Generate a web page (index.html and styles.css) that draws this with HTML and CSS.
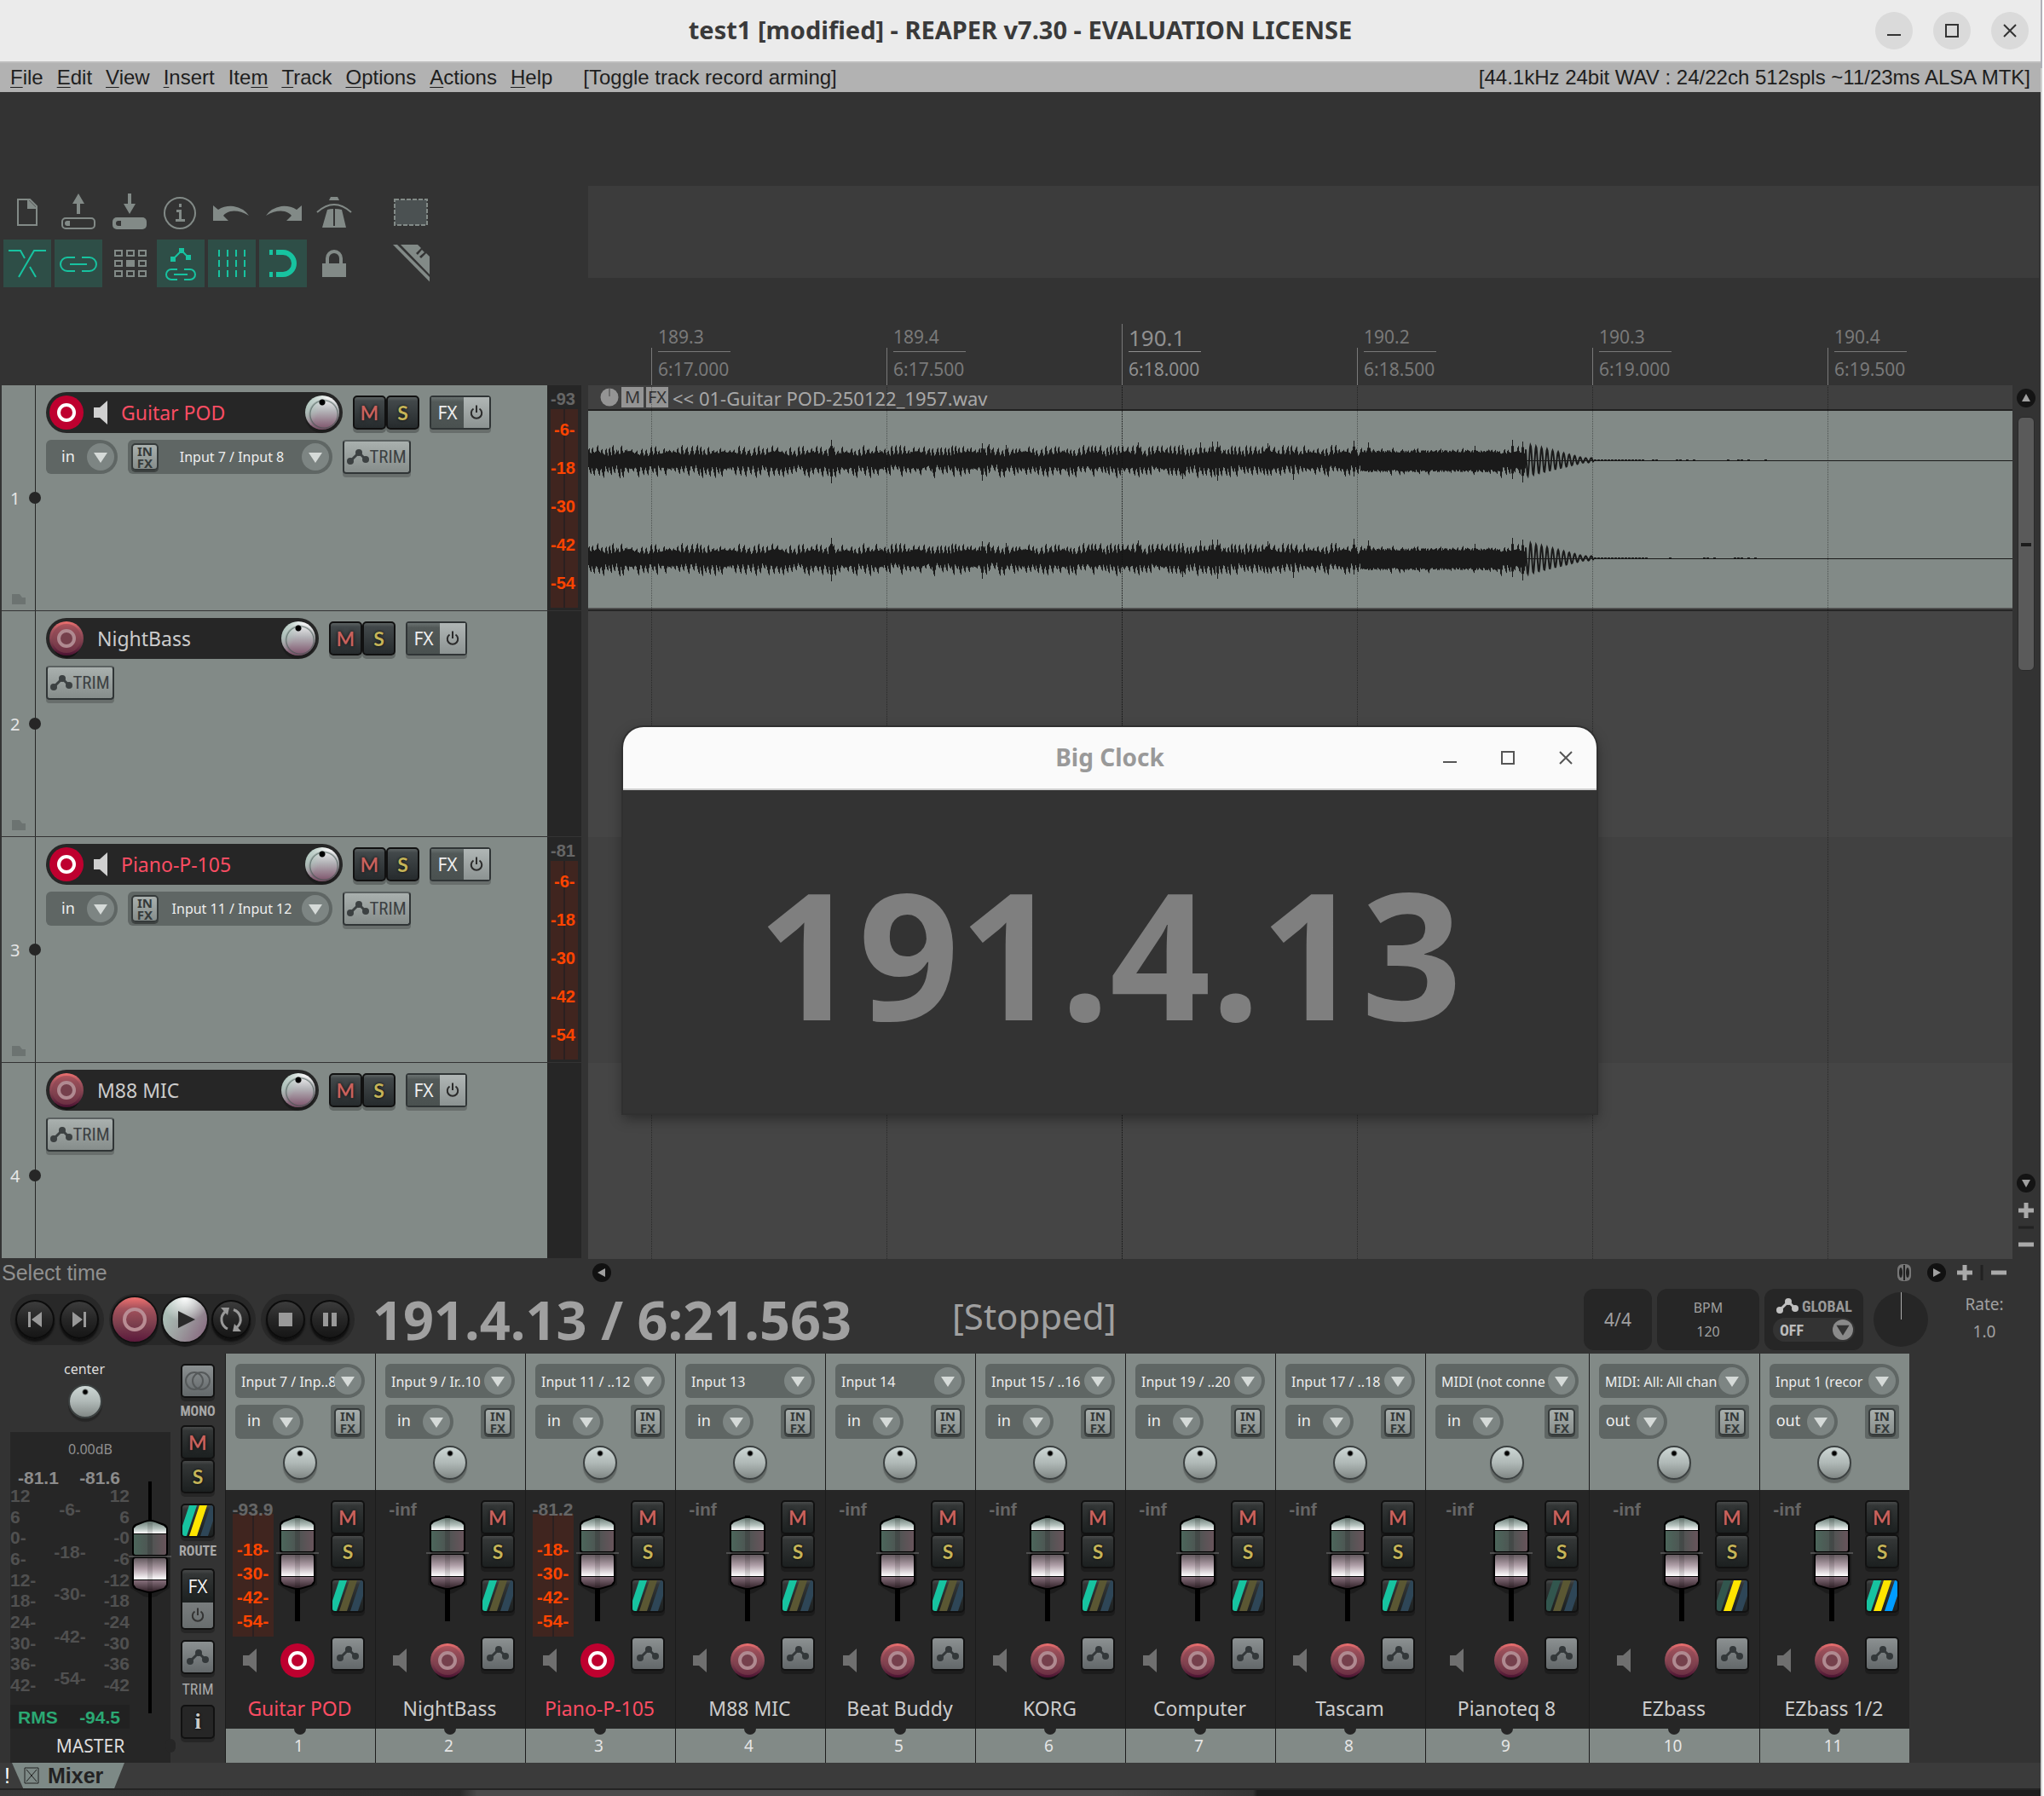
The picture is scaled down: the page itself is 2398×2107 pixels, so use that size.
FILE: index.html
```html
<!DOCTYPE html>
<html lang="en">
<head>
<meta charset="utf-8">
<title>test1 [modified] - REAPER v7.30 - EVALUATION LICENSE</title>
<link rel="stylesheet" href="styles.css">
</head>
<body>
<svg class="defs" width="0" height="0" aria-hidden="true">
  <defs>
    <linearGradient id="gRec" x1="0" y1="0" x2="0" y2="1"><stop offset="0" stop-color="#f0716f"/><stop offset=".25" stop-color="#a85560"/><stop offset=".6" stop-color="#7c3f4d"/><stop offset="1" stop-color="#4c1232"/></linearGradient>
    <linearGradient id="gCapA" x1="0" y1="0" x2="0" y2="1"><stop offset="0" stop-color="#6f827b"/><stop offset=".6" stop-color="#b5c2be"/><stop offset="1" stop-color="#ffffff"/></linearGradient>
    <linearGradient id="gCapB" x1="0" y1="0" x2="1" y2="0"><stop offset="0" stop-color="#4c665b"/><stop offset=".5" stop-color="#4d5452"/><stop offset="1" stop-color="#68545b"/></linearGradient>
    <linearGradient id="gCapC" x1="0" y1="0" x2="0" y2="1"><stop offset="0" stop-color="#645a5f"/><stop offset=".5" stop-color="#b09fa8"/><stop offset="1" stop-color="#ffffff"/></linearGradient>
    <linearGradient id="gCapD" x1="0" y1="0" x2="0" y2="1"><stop offset="0" stop-color="#87707c"/><stop offset="1" stop-color="#33242b"/></linearGradient>
  </defs>
  <symbol id="rec" viewBox="0 0 40 44"><ellipse cx="20" cy="24" rx="17" ry="19" fill="#000" opacity=".5"/><circle cx="20" cy="20" r="20" fill="url(#gRec)"/><circle cx="20" cy="20" r="17" fill="#84434f" opacity=".5"/><circle cx="20" cy="20" r="9" fill="#75404c" stroke="#b08a91" stroke-width="4"/></symbol>
  <symbol id="rec-on" viewBox="0 0 40 44"><circle cx="20" cy="20" r="20" fill="#be002f"/><circle cx="20" cy="20" r="9" fill="none" stroke="#fff" stroke-width="4"/></symbol>
  <symbol id="speaker" viewBox="0 0 16 28"><path d="M0 8h7L16 0v28L7 20H0z" fill="currentColor"/></symbol>
  <symbol id="power" viewBox="0 0 16 18"><path d="M4.5 4.5a6.2 6.2 0 1 0 7 0M8 0.500V9" fill="none" stroke="currentColor" stroke-width="2"/></symbol>
  <symbol id="env" viewBox="0 0 26 18"><path d="M4 14L14 4L22 12" fill="none" stroke="currentColor" stroke-width="3"/><circle cx="4" cy="14" r="4" fill="currentColor"/><circle cx="14" cy="4" r="4" fill="currentColor"/><circle cx="22" cy="12" r="4" fill="currentColor"/></symbol>
  <symbol id="cap" viewBox="-4 0 50 92">
    <path d="M-2 44V80L14 90Q21 92 28 90L44 80V44z" fill="#000" opacity=".25"/>
    <path d="M0 11Q0 6 5 4.500L15 1Q21 -1 27 1L37 4.500Q42 6 42 11V39Q42 42 39 43Q42 44 42 48V75Q42 80 37 82L27 85Q21 87 15 85L5 82Q0 80 0 75V48Q0 44 3 43Q0 42 0 39z" fill="#000"/>
    <path d="M2 16V10L5 7L15 3Q21 1 27 3L37 7L40 10V16z" fill="url(#gCapA)"/>
    <path d="M2 17H40V39Q40 41 38 41H4Q2 41 2 39z" fill="url(#gCapB)"/>
    <path d="M2 70V47Q2 45 4 45H38Q40 45 40 47V70z" fill="url(#gCapC)"/>
    <path d="M2 71H40V76L37 80L27 83Q21 85 15 83L5 80L2 76z" fill="url(#gCapD)"/>
    <path d="M18 3h6v80h-6z" fill="#000" opacity=".12"/>
    <path d="M-4 43H46" stroke="#777" stroke-width="1"/>
  </symbol>
</svg>

<div class="app">
  <header class="titlebar">
    <h1>test1 [modified] - REAPER v7.30 - EVALUATION LICENSE</h1>
    <div class="winbtns">
      <button aria-label="Minimize"><svg width="16" height="16"><path d="M0 13H16" stroke="#333" stroke-width="2"/></svg></button>
      <button aria-label="Maximize"><svg width="16" height="16"><path d="M1 1H15V15H1z" fill="none" stroke="#333" stroke-width="2"/></svg></button>
      <button aria-label="Close"><svg width="16" height="16"><path d="M1 1L15 15M15 1L1 15" stroke="#333" stroke-width="2"/></svg></button>
    </div>
  </header>
  <nav class="menubar">
    <a href="#"><u>F</u>ile</a><a href="#"><u>E</u>dit</a><a href="#"><u>V</u>iew</a><a href="#"><u>I</u>nsert</a><a href="#">Ite<u>m</u></a><a href="#"><u>T</u>rack</a><a href="#"><u>O</u>ptions</a><a href="#"><u>A</u>ctions</a><a href="#"><u>H</u>elp</a>
    <span class="lastaction">[Toggle track record arming]</span>
    <span class="audio">[44.1kHz 24bit WAV : 24/22ch 512spls ~11/23ms ALSA MTK]</span>
  </nav>

  <section class="top">
    <div class="toolbar">
      <button aria-label="New project"><svg viewBox="0 0 56 56"><path d="M17 13H31L39 21V43H17z" fill="none" stroke="#828a87" stroke-width="2"/><path d="M28 12V24H40z" fill="#828a87"/></svg></button>
      <button aria-label="Open project"><svg viewBox="0 0 56 56"><path d="M28 6L35 18H30V30H26V18H21z" fill="#828a87"/><rect x="9" y="35" width="38" height="12" rx="4" fill="none" stroke="#828a87" stroke-width="2"/><path d="M18 38v6h-3a3 3 0 0 1 0-6z" fill="#828a87"/></svg></button>
      <button aria-label="Save project"><svg viewBox="0 0 56 56"><path d="M28 30L35 18H30V6H26V18H21z" fill="#828a87"/><rect x="8" y="34" width="40" height="14" rx="5" fill="#828a87"/><path d="M18 38v6h-3a3 3 0 0 1 0-6z" fill="#333"/></svg></button>
      <button aria-label="Project settings"><svg viewBox="0 0 56 56"><circle cx="27" cy="29" r="18" fill="none" stroke="#828a87" stroke-width="2"/><path d="M26 18h3v4h-3zM23 25h6v11h4v3H22v-3h4v-8h-3z" fill="#828a87"/></svg></button>
      <button aria-label="Undo"><svg viewBox="0 0 56 56"><path d="M6 20L12 25Q20 20 30 21Q42 23 48 32Q36 25 26 27Q20 29 18 32L24 38H6z" fill="#828a87"/></svg></button>
      <button aria-label="Redo"><svg viewBox="0 0 56 56"><path d="M50 20L44 25Q36 20 26 21Q14 23 8 32Q20 25 30 27Q36 29 38 32L32 38H50z" fill="#828a87"/></svg></button>
      <button aria-label="Metronome"><svg viewBox="0 0 56 56"><path d="M24 10h8l2 4H22zM20 25Q23 24 27 24V43H29V24Q33 24 37 25L42 46H14zM26 43H30V46H26z" fill="#828a87"/><path d="M28 24V44" stroke="#333" stroke-width="2"/><path d="M8 28Q28 10 48 28" fill="none" stroke="#828a87" stroke-width="2"/></svg></button>
      <button class="far" aria-label="Marquee select"><svg viewBox="0 0 56 56"><rect x="9" y="13" width="38" height="30" fill="#4b5152" stroke="#828a87" stroke-width="2" stroke-dasharray="5 2"/></svg></button>
      <button class="on" aria-label="Auto crossfade"><svg viewBox="0 0 56 56" fill="none" stroke="#17c3a0" stroke-width="2"><path d="M6 13H20L25 22M31 32L38 44M18 44L36 13H50"/></svg></button>
      <button class="on" aria-label="Item grouping"><svg viewBox="0 0 56 56" fill="none" stroke="#17c3a0" stroke-width="2"><path d="M24 21H15a8 8 0 0 0 0 16H24M32 21H41a8 8 0 0 1 0 16H32M18 29H38"/></svg></button>
      <button aria-label="Ripple editing"><svg viewBox="0 0 56 56" fill="none" stroke="#828a87" stroke-width="2"><path d="M11 13h8v6h-8zM25 13h8v6h-8zM39 13h8v6h-8zM11 25h8v6h-8zM39 25h8v6h-8zM11 37h8v6h-8zM25 37h8v6h-8zM39 37h8v6h-8z"/><path d="M25 25h8v6h-8z" fill="#828a87"/></svg></button>
      <button class="on" aria-label="Envelope follow"><svg viewBox="0 0 56 56" fill="none" stroke="#17c3a0" stroke-width="2"><path d="M19 23L29 13L37 21M24 35H17a6 6 0 0 0 0 12H24M32 35H39a6 6 0 0 1 0 12H32M20 41H36"/><path d="M26 10h6v6h-6zM16 20h6v6h-6zM34 18h6v6h-6z" fill="#17c3a0" stroke="none"/></svg></button>
      <button class="on" aria-label="Grid lines"><svg viewBox="0 0 56 56" stroke="#17c3a0" stroke-width="2"><path d="M13 12V44M23 12V44M33 12V44M43 12V44" stroke-dasharray="8 4"/></svg></button>
      <button class="on" aria-label="Snap"><svg viewBox="0 0 56 56"><path d="M20 15H28a13 13 0 0 1 0 26H20" fill="none" stroke="#17c3a0" stroke-width="6"/><path d="M12 12h4v6h-4zM12 38h4v6h-4z" fill="#17c3a0"/></svg></button>
      <button aria-label="Lock"><svg viewBox="0 0 56 56"><path d="M20 30V22a8 8 0 0 1 16 0V30" fill="none" stroke="#828a87" stroke-width="4"/><path d="M14 28H42V44H14z" fill="#828a87"/></svg></button>
      <button class="far" aria-label="Ruler tool"><svg viewBox="0 0 56 56"><path d="M7 6H12L50 44V49.500z" fill="#828a87"/><path d="M16 6H36L40 10L34 16L36 18L41 12L44 15L38 20L40 22L46 16L50 20V41z" fill="#828a87"/></svg></button>
    </div>
    <div class="topright">
      <div class="region"></div>
      <div class="ruler">
        <div class="mark"><span>189.3</span><span>6:17.000</span></div>
        <div class="mark"><span>189.4</span><span>6:17.500</span></div>
        <div class="mark bar"><span>190.1</span><span>6:18.000</span></div>
        <div class="mark"><span>190.2</span><span>6:18.500</span></div>
        <div class="mark"><span>190.3</span><span>6:19.000</span></div>
        <div class="mark"><span>190.4</span><span>6:19.500</span></div>
      </div>
    </div>
  </section>

  <main class="main">
    <div class="tracks" id="tracks"></div>
    <div class="arrange">
      <div class="item">
        <div class="itemhead"><svg width="22" height="22"><circle cx="11" cy="11" r="10.500" fill="#949494"/><path d="M11 0V10" stroke="#444"/></svg><span class="tag">M</span><span class="tag">FX</span><span>&lt;&lt; 01-Guitar POD-250122_1957.wav</span></div>
        <svg class="wave" id="wave" height="232" width="1671" aria-label="Waveform"></svg>
      </div>
      <div class="lane"></div><div class="lane dark"></div><div class="lane"></div>
      <div class="grid"><i></i><i></i><i class="bar"></i><i></i><i></i><i></i></div>
    </div>
    <div class="vscroll">
      <button class="sb" aria-label="Scroll up"><svg width="22" height="22"><circle cx="11" cy="11" r="11" fill="#141414"/><path d="M11 6L16 15H6z" fill="#a0a0a0"/></svg></button>
      <div class="thumb"></div>
      <svg class="vzoom" width="22" height="92"><circle cx="11" cy="11" r="11" fill="#141414"/><path d="M11 16L16 7H6z" fill="#a0a0a0"/><path d="M2 43H20M11 34V52" stroke="#aaa" stroke-width="5"/><path d="M2 63H20" stroke="#222" stroke-width="3"/><path d="M2 83H20" stroke="#aaa" stroke-width="5"/></svg>
    </div>
  </main>

  <div class="status">
    <span class="hint">Select time</span>
    <button class="sb" aria-label="Scroll left"><svg width="22" height="22"><circle cx="11" cy="11" r="11" fill="#111"/><path d="M6 11L15 6V16z" fill="#a0a0a0"/></svg></button>
    <svg class="hzoom" width="132" height="22"><rect x="1" y="1" width="16" height="20" rx="6" fill="#777"/><ellipse cx="5" cy="11" rx="2" ry="6" fill="#222"/><path d="M9 2V20" stroke="#222" stroke-width="2"/><ellipse cx="13" cy="11" rx="2" ry="6" fill="#222"/><circle cx="47" cy="11" r="11" fill="#111"/><path d="M52 11L43 6V16z" fill="#a0a0a0"/><path d="M71 11H89M80 2V20" stroke="#aaa" stroke-width="5"/><path d="M100 2V20" stroke="#222" stroke-width="3"/><path d="M111 11H129" stroke="#aaa" stroke-width="5"/></svg>
  </div>

  <section class="transport">
    <div class="pill">
      <button class="round" aria-label="Go to start"><svg width="20" height="20"><path d="M2 1H5V19H2zM18 1V19L6 10z" fill="#999"/></svg></button>
      <button class="round" aria-label="Go to end"><svg width="20" height="20"><path d="M15 1H18V19H15zM2 1V19L14 10z" fill="#999"/></svg></button>
    </div>
    <div class="pill mid">
      <button class="big rec" aria-label="Record"><svg width="56" height="56"><circle cx="28" cy="28" r="12" fill="none" stroke="#b98d94" stroke-width="4"/></svg></button>
      <button class="big play" aria-label="Play"><svg width="56" height="56"><path d="M20 18L40 28L20 38z" fill="#2a2a2a"/></svg></button>
      <button class="round" aria-label="Repeat"><svg width="30" height="30" fill="none" stroke="#999" stroke-width="3"><path d="M8 6A12 12 0 0 0 11 26M22 24A12 12 0 0 0 18 3.500"/><path d="M3 1H13L11 10zM27 29H17L19 20z" fill="#999" stroke="none"/></svg></button>
    </div>
    <div class="pill">
      <button class="round" aria-label="Stop"><svg width="20" height="20"><path d="M2 2H18V18H2z" fill="#999"/></svg></button>
      <button class="round" aria-label="Pause"><svg width="20" height="20"><path d="M2 2H8V18H2zM12 2H18V18H12z" fill="#999"/></svg></button>
    </div>
    <output class="time">191.4.13 / 6:21.563</output>
    <output class="state">[Stopped]</output>
    <button class="box sig">4/4</button>
    <div class="box bpm"><label for="bpm">BPM</label><input id="bpm" value="120"></div>
    <div class="box global"><div class="gl"><svg width="26" height="18"><use href="#env"/></svg><span class="narrow">GLOBAL</span></div>
      <div class="dd off"><select class="narrow" aria-label="Global automation"><option>OFF</option></select></div></div>
    <input class="ratedial" type="range" aria-label="Play rate">
    <div class="rate"><label for="rate">Rate:</label><input id="rate" value="1.0"></div>
  </section>

  <section class="mixer">
    <div class="master">
      <div class="mleft">
        <span class="pan">center</span>
        <input class="knob" type="range" aria-label="Master pan">
        <div class="mpanel">
          <span class="db">0.00dB</span>
          <div class="mpeaks"><span>-81.1</span><span>-81.6</span></div>
          <div class="mscale">
            <div class="sc"><span>12</span><span>6</span><span>0-</span><span>6-</span><span>12-</span><span>18-</span><span>24-</span><span>30-</span><span>36-</span><span>42-</span></div>
            <div class="sc centre"><span>-6-</span><span>-18-</span><span>-30-</span><span>-42-</span><span>-54-</span></div>
            <div class="sc right"><span>12</span><span>6</span><span>-0</span><span>-6</span><span>-12</span><span>-18</span><span>-24</span><span>-30</span><span>-36</span><span>-42</span></div>
          </div>
          <div class="rms"><span>RMS</span><span>-94.5</span></div>
          <span class="mname">MASTER</span>
          <div class="fader mfader"><svg class="cap" width="50" height="92"><use href="#cap"/></svg><input type="range" aria-label="Master volume"></div>
        </div>
      </div>
      <div class="mright">
        <button class="sq grey" aria-label="Mono"><svg width="30" height="22" fill="none" stroke="#55595a" stroke-width="2"><circle cx="11" cy="11" r="10"/><circle cx="19" cy="11" r="10"/></svg></button>
        <span class="narrow">MONO</span>
        <button class="sq m">M</button><button class="sq s">S</button>
        <button class="sq route" aria-label="Route" id="mroute"></button>
        <span class="narrow cap2">ROUTE</span>
        <button class="sq fxv">FX</button><button class="sq pwv" aria-label="FX bypass"><svg width="16" height="18"><use href="#power"/></svg></button>
        <button class="sq grey envb" aria-label="Trim envelopes"><svg width="26" height="18"><use href="#env"/></svg></button>
        <span class="narrow cap3">TRIM</span>
        <button class="sq info">i</button>
      </div>
    </div>
    <div class="strips" id="strips"></div>
  </section>

  <footer class="tabs"><span class="bang">!</span><a class="tab" href="#"><svg width="18" height="20" fill="none" stroke="#222"><path d="M1 1H17V19H1zM3 3L15 17M15 3L3 17" stroke-width="1"/></svg>Mixer</a></footer>
  <div class="desk"></div>

  <section class="clock" aria-label="Big Clock">
    <header><h2>Big Clock</h2>
      <div class="winbtns">
        <button aria-label="Minimize"><svg width="16" height="16"><path d="M0 13H16" stroke="#555" stroke-width="2"/></svg></button>
        <button aria-label="Maximize"><svg width="16" height="16"><path d="M1 1H15V15H1z" fill="none" stroke="#555" stroke-width="2"/></svg></button>
        <button aria-label="Close"><svg width="16" height="16"><path d="M1 1L15 15M15 1L1 15" stroke="#555" stroke-width="2"/></svg></button>
      </div>
    </header>
    <output>191.4.13</output>
  </section>
</div>
<script src="app.js"></script>
</body>
</html>
```
FILE: styles.css
```css
* { box-sizing: border-box; }
body { margin: 0; height: 100vh; background: linear-gradient(90deg, transparent calc(100% - 2px), #fff 0), linear-gradient(#b0b0b8 80px, #d0d0d0 0); font-family: "Noto Sans", "Open Sans", sans-serif; color: #ddd; overflow: hidden; }
button, select, input { font: inherit; color: inherit; border: 0; padding: 0; margin: 0; background: none; appearance: none; }
button { display: flex; align-items: center; justify-content: center; flex: none; }
svg { display: block; flex: none; overflow: visible; }
.defs { position: absolute; }
.narrow { font-family: "Liberation Sans Narrow", "Roboto Condensed", "Noto Sans", sans-serif; }
.app { position: relative; display: flex; flex-direction: column; height: 100vh; margin-right: 4px; background: #333; }

.titlebar { display: flex; position: relative; align-items: center; justify-content: center; flex: none; height: 74px; background: #ebebeb; border-bottom: 2px solid #bdbdbd; }
.titlebar h1 { margin: 0; font-size: 29px; line-height: 36px; padding-bottom: 2px; font-weight: 700; color: #3a3a3a; }
.winbtns { position: absolute; right: 14px; top: 14px; display: flex; gap: 24px; }
.winbtns button { width: 44px; height: 44px; border-radius: 50%; background: #dadada; }

.menubar { display: flex; align-items: center; flex: none; height: 34px; padding: 0 12px; gap: 16px; background: #b2b2b2; color: #1e1e1e; font: 24px/34px "Liberation Sans", Arial, sans-serif; white-space: nowrap; }
.menubar a { color: inherit; text-decoration: none; }
.menubar u { text-underline-offset: 3px; text-decoration-thickness: 1px; }
.lastaction { margin-left: 20px; }
.audio { margin-left: auto; }

.top { display: grid; grid-template-columns: 690px 1fr; flex: none; height: 344px; }
.toolbar { display: grid; grid-template-columns: repeat(7, 56px) 86px; gap: 4px; align-content: start; padding: 113px 0 0 4px; }
.toolbar button { width: 56px; height: 56px; }
.toolbar .on { background: #2e4e47; }
.toolbar .far { margin-left: 30px; }
.toolbar svg { width: 56px; height: 56px; }
.topright { padding-top: 110px; overflow: hidden; }
.region { height: 108px; margin-right: 2px; background: #3c3c3c; }
.ruler { display: flex; align-items: flex-end; height: 126px; padding-left: 74px; }
.mark { flex: none; width: 276px; height: 72px; padding-left: 8px; color: #797979; font-size: 21px; display: flex; flex-direction: column; align-items: flex-start; background: linear-gradient(#797979, #797979) left bottom / 1px 44px no-repeat; }
.mark span { line-height: 30px; min-width: 85px; }
.mark span:first-child { border-bottom: 1px solid #797979; padding-bottom: 2px; }
.mark span:last-child { margin-top: 5px; }
.mark.bar { color: #909090; background-size: 1px 72px; }
.mark.bar span:first-child { font-size: 26px; line-height: 32px; padding-bottom: 0; border-bottom-color: #909090; }

.main { display: flex; flex: 1; min-height: 0; }
.tracks { width: 682px; padding: 0 0 2px 2px; flex: none; overflow: hidden; border-bottom: 1px solid #333; display: flex; flex-direction: column; }
.track { display: flex; flex: none; height: 265px; border-bottom: 1px solid #333; background: #828a87; }
.idx { position: relative; width: 40px; flex: none; display: flex; align-items: center; border-right: 1px solid #262626; padding-left: 10px; font-size: 20px; color: #e6e6e6; }
.idx::after { content: ""; position: absolute; right: -7px; width: 14px; height: 14px; border-radius: 50%; background: #262626; }
.idx svg { position: absolute; left: 12px; bottom: 7px; }
.controls { flex: 1; padding: 8px 12px; display: flex; flex-direction: column; gap: 8px; }
.row { display: flex; align-items: center; gap: 12px; }
.name { display: flex; align-items: center; width: 320px; height: 48px; padding: 4px; gap: 12px; border-radius: 24px; background: #262626; color: #ccc; font-size: 23px; }
.name span { flex: 1; margin-left: 4px; line-height: 32px; white-space: nowrap; }
.track.armed .name { width: 348px; }
.armed .name span, .armed .sname { color: #fb4d63; }
.name .sp { color: #d0d0d0; width: 16px; height: 28px; }
.recb { width: 40px; height: 40px; }
.recb svg { width: 40px; height: 44px; margin-top: 4px; }

.knob { width: 40px; height: 40px; border-radius: 50%; flex: none; border: 2px solid #3c4141; background: radial-gradient(circle at 18px 7px, #000 2px, transparent 4px), linear-gradient(#cdd7d5, #b0b9b7 50%, #818886); box-shadow: 0 4px 1px rgba(0,0,0,.25); }
.knob.tk { border: 0; background: radial-gradient(circle at 20px 8px, #000 3px, transparent 4px), radial-gradient(circle at 22px 22px, transparent 15px, rgba(60,80,75,.6) 16px, transparent 18px), linear-gradient(120deg, #a9c4b9 5%, transparent 45%), linear-gradient(#fff, #b4b4b8 45%, #7c4f68); }
input[type=range]::-webkit-slider-thumb { appearance: none; width: 1px; height: 1px; opacity: 0; }

.sq { width: 40px; height: 40px; border: 2px solid #111; border-radius: 5px; background: linear-gradient(#484a4a, #333636 12%, #1c2020); box-shadow: 0 4px 0 rgba(0,0,0,.25); font: 700 23px/1 Lato, sans-serif; text-shadow: 0 0 3px #000; }
.m { color: #cb625c; font-weight: 400; text-shadow: 0 0 1px #cb625c, 0 0 4px #000; }
.s { color: #c5b458; }
.ms, .fx { display: flex; flex: none; }
.ms .sq { width: 39px; background: linear-gradient(#5c6262, #42484a 12%, #262b2d); }
.fx { width: 72px; height: 40px; border: 2px solid #303536; border-radius: 4px; box-shadow: 0 4px 0 rgba(0,0,0,.2); }
.fx button { height: 36px; flex: 1; }
.fx .f { background: linear-gradient(#6a7271, #525958 15%, #4a5150); color: #eee; font-size: 21px; flex: 0 0 38px; }
.fx .p { background: linear-gradient(#b0b6b5, #8c9392); color: #2b2b2b; }
.trim { width: 80px; height: 40px; border: 2px solid #303536; border-top-color: #5b6161; border-radius: 4px; background: linear-gradient(#a9b0ae, #868d8b); box-shadow: 0 4px 0 rgba(0,0,0,.2); color: #3c4142; font-size: 21px; }
.dd { position: relative; height: 40px; border-radius: 6px 20px 20px 6px; background: #5f6664; flex: none; }
.dd::after { content: ""; position: absolute; right: 4px; top: 4px; width: 32px; height: 32px; border-radius: 50%; background: #7d8583 url("data:image/svg+xml,%3Csvg xmlns='http://www.w3.org/2000/svg' viewBox='0 0 32 32'%3E%3Cpath d='M8 11H24L16 23z' fill='%23d5dad8'/%3E%3C/svg%3E"); pointer-events: none; }
.dd select { width: 100%; height: 40px; padding: 0 36px 2px 8px; font-size: 16px; color: #eee; outline: none; }
.dd.io { width: 84px; }
.dd.io select { font-size: 18px; text-align: center; padding-left: 4px; }
.dd.in { width: 240px; display: flex; }
.dd.in select { text-align: center; padding: 0 38px 0 2px; }
.infx { width: 32px; height: 32px; margin: 4px; border: 2px solid #353a3a; border-radius: 5px; background: linear-gradient(#a9b0ae, #868d8b); box-shadow: 0 2px 0 rgba(0,0,0,.35); color: #353a3a; font-weight: 700; font-size: 15px; line-height: 14px; white-space: pre-line; }

.meter { position: relative; width: 40px; flex: none; background: #262626; padding: 6px 4px 3px; font: 700 20px/20px "Liberation Sans", Arial, sans-serif; color: #666; overflow: hidden; }
.bars { background: linear-gradient(90deg, transparent 15px, #2b2020 15px, #2b2020 17px, transparent 17px), #40251f; color: #ff4400; display: flex; flex-direction: column; }
.meter .bars { margin: 2px 0 0; height: 233px; padding-top: 14px; gap: 25px; }
.meter .bars span:first-child { padding-left: 4px; }

.arrange { position: relative; flex: 1; margin-left: 8px; overflow: hidden; background: #444; }
.item { height: 265px; border-bottom: 2px solid #262626; background: #444; overflow: hidden; }
.itemhead { display: flex; align-items: center; gap: 3px; height: 30px; padding-left: 14px; border-bottom: 2px solid #222; background: #404040; color: #a8a8a8; font-size: 22px; line-height: 28px; white-space: nowrap; }
.itemhead span:last-child { padding: 2px 0 0 2px; }
.tag { width: 26px; height: 24px; background: #949494; color: #333; text-align: center; line-height: 24px; font-size: 20px; }
.wave { background: #828a87; border-bottom: 1px solid #555; overflow: hidden; }
.lane { height: 265px; background: #454545; }
.lane.dark { background: #414141; }
.grid { position: absolute; inset: 0; padding-left: 74px; display: flex; }
.grid i { flex: 0 0 276px; background: repeating-linear-gradient(rgba(0,0,0,.4) 0 1px, transparent 1px 2px) left / 1px 100% no-repeat; }
.grid .bar { background: repeating-linear-gradient(#111 0 1px, transparent 1px 2px) left / 1px 100% no-repeat; }
.vscroll { width: 33px; flex: none; display: flex; flex-direction: column; align-items: center; padding: 4px 2px 8px 0; }
.thumb { position: relative; width: 20px; height: 298px; margin-top: 11px; border-radius: 6px; background: #5a5a5a; border: 1px solid #2a2a2a; }
.thumb::after { content: ""; position: absolute; left: 3px; right: 3px; top: 147px; height: 4px; background: #1c1c1c; }
.vzoom { margin-top: auto; }

.status { display: flex; align-items: center; flex: none; height: 31px; padding: 0 37px 0 2px; }
.hint { width: 693px; font: 25px/28px "Liberation Sans", Arial, sans-serif; color: #8f8f8f; }
.hzoom { margin-left: auto; }

.transport { display: flex; align-items: center; flex: none; height: 80px; padding-left: 12px; gap: 6px; color: #a0a0a0; }
.pill { display: flex; align-items: center; gap: 6px; height: 60px; padding: 0 6px; border-radius: 30px; background: #282828; flex: none; }
.pill.mid { padding-left: 2px; gap: 3px; }
.round { width: 46px; height: 46px; border-radius: 50%; border: 2px solid #0c0c0c; background: linear-gradient(#3c3c3c, #262626 50%, #161616); box-shadow: 0 3px 2px #111; }
.big { width: 56px; height: 56px; border-radius: 50%; border: 2px solid #111; box-shadow: 0 4px 1px #1b1b1b; }
.big.rec { background: linear-gradient(#f0716f, #a4525c 25%, #7c3f4d 60%, #5c1a3c); }
.big.play { background: radial-gradient(circle at 50% 0, #fff, transparent 50%), linear-gradient(120deg, #a9bcb4 20%, #9d9fa0 50%, #84607a); }
.time { margin-left: 15px; width: 674px; font-size: 63px; font-weight: 700; line-height: 76px; white-space: nowrap; }
.state { font-size: 42px; line-height: 56px; margin-right: auto; padding-bottom: 8px; }
.box { height: 72px; border-radius: 12px; background: #262626; flex: none; }
.sig { width: 80px; font-size: 21px; }
.bpm, .rate { display: flex; flex-direction: column; align-items: center; width: 120px; font-size: 16px; line-height: 24px; padding: 10px 0; gap: 4px; }
.bpm input, .rate input { width: 100%; height: 24px; text-align: center; }
.rate { width: 132px; font-size: 19px; margin-left: -6px; padding: 0 0 4px; gap: 8px; }
.global { width: 116px; padding: 8px 10px; }
.gl { display: flex; align-items: center; gap: 4px; height: 24px; padding-left: 4px; font-size: 18px; font-weight: 700; color: #999; }
.gl svg { color: #c0c0c0; }
.dd.off { height: 28px; margin-top: 2px; border-radius: 14px; background: #333; }
.dd.off select { height: 28px; padding: 0 0 0 8px; font-size: 18px; font-weight: 700; color: #bbb; }
.dd.off::after { width: 24px; height: 24px; right: 2px; top: 2px; background: #8a8a8a url("data:image/svg+xml,%3Csvg xmlns='http://www.w3.org/2000/svg' viewBox='0 0 32 32'%3E%3Cpath d='M6 9H26L16 25z' fill='%23333'/%3E%3C/svg%3E"); }
.ratedial { width: 64px; height: 64px; margin-left: 6px; border-radius: 50%; background: linear-gradient(#aaa, #aaa) center top / 1px 32px no-repeat, #262626; flex: none; }

.mixer { display: flex; flex: none; height: 480px; }
.master { display: flex; width: 264px; flex: none; }
.mleft { width: 200px; padding-left: 12px; display: flex; flex-direction: column; }
.pan { height: 36px; line-height: 36px; text-align: center; font-size: 16px; padding-right: 14px; }
.mleft > .knob { margin-left: 68px; }
.mpanel { position: relative; flex: 1; margin-top: 16px; background: #262626; display: flex; flex-direction: column; font: 700 21px/24px "Liberation Sans", Arial, sans-serif; }
.mpanel::after { content: ""; position: absolute; right: -6px; bottom: 12px; width: 12px; height: 16px; border-radius: 6px; background: #262626; }
.db { font: 16px/24px "Noto Sans", sans-serif; color: #909090; text-align: center; margin-top: 8px; }
.mpeaks { display: flex; justify-content: space-between; width: 129px; padding-left: 9px; margin-top: 10px; color: #8c8c8c; }
.mscale { display: flex; justify-content: space-between; width: 140px; height: 257px; margin-top: -3px; color: #505050; }
.sc { display: flex; flex-direction: column; line-height: 24px; justify-content: space-between; padding-bottom: 11px; }
.sc.centre { padding: 16px 0 19px; text-align: center; }
.sc.right { text-align: right; }
.rms { display: flex; justify-content: space-between; align-items: center; width: 140px; height: 28px; padding: 2px 11px 0 9px; background: #212121; color: #2ba873; }
.mname { font: 21px/40px "Noto Sans", sans-serif; text-align: center; color: #ddd; }
.mright { width: 40px; margin: 12px 0 0 12px; display: flex; flex-direction: column; align-items: center; }
.mright .narrow { height: 32px; line-height: 32px; font-size: 16px; font-weight: 700; color: #a8a8a8; }
.grey { background: linear-gradient(#8b9091, #63686a); color: #33383a; }
.mright .route { margin-top: 12px; }
.mright .cap2 { margin-bottom: 4px; }
.fxv { border-bottom: 0; border-radius: 5px 5px 0 0; font: 21px/1 "Noto Sans", sans-serif; color: #eee; box-shadow: none; }
.pwv { height: 32px; border-top: 0; border-radius: 0 0 5px 5px; background: linear-gradient(#797d7e, #686d6e); color: #333; text-shadow: none; }
.envb { margin-top: 12px; }
.mright .cap3 { height: 36px; line-height: 36px; font-size: 18px; font-weight: 400; }
.info { font: 700 26px/1 "Liberation Serif", serif; color: #ccc; background: #262626; }

.fader { position: relative; height: 124px; width: 6px; background: #000; }
.fader .cap { position: absolute; left: -22px; top: 1px; }
.fader input { position: absolute; inset: 0 -18px; width: 42px; height: 100%; opacity: 0; }
.mfader { position: absolute; left: 162px; top: 58px; width: 4px; height: 272px; }
.mfader .cap { left: -23px; top: 45px; }

.strips { display: flex; overflow: hidden; }
.strip { width: 176px; flex: none; border-left: 1px solid #1c1c1c; display: flex; flex-direction: column; background: #828a87; }
.strip.w192 { width: 192px; }
.strip.w200 { width: 200px; }
.stop { height: 160px; padding: 12px 12px 12px 11px; display: flex; flex-direction: column; gap: 8px; }
.stop .dd select { padding: 2px 34px 0 7px; }
.stop .knob { align-self: center; }
.stop .between { display: flex; justify-content: space-between; }
.stop .dd.io { width: 80px; }
.stop .dd.io select { padding: 0 36px 4px 0; }
.wrapfx { width: 40px; height: 40px; background: #5f6664; border-radius: 3px; }
.slow { height: 280px; background: #262626; padding: 12px 12px 0 0; display: flex; flex-direction: column; }
.cols { display: grid; grid-template-columns: 1fr 42px 58px; height: 208px; }
.cols > div { display: flex; flex-direction: column; align-items: center; }
.cols .c3 { width: 40px; justify-self: end; }
.peak { position: relative; z-index: 1; height: 20px; font: 700 21px/22px "Liberation Sans", Arial, sans-serif; color: #666; }
.slow .bars { width: 48px; height: 144px; margin-top: -4px; padding-top: 32px; gap: 8px; align-items: center; font: 700 21px/20px "Liberation Sans", Arial, sans-serif; background: linear-gradient(90deg, transparent 23px, #2b2020 23px, #2b2020 25px, transparent 25px), #40251f; }
.slow .bars span { height: 20px; }
.slow .bars.none { visibility: hidden; }
.c1 .spb { margin: 14px 8px 0 0; color: #6f6f6f; }
.c2 .fader { margin-top: 18px; }
.c2 .recb { margin-top: 26px; }
.c3 .route { margin-top: 12px; }
.c3 .envb { margin-top: 28px; }
.route { overflow: hidden; }
.sname { margin-top: 13px; height: 46px; line-height: 46px; font-size: 23px; text-align: center; color: #ccc; padding-left: 10px; white-space: nowrap; }
.sfoot { position: relative; height: 40px; line-height: 40px; padding-right: 4px; text-align: center; font-size: 19px; color: #e6e6e6; }
.sfoot::before { content: ""; position: absolute; top: 0; left: calc(50% - 8px); width: 14px; height: 7px; border-radius: 0 0 7px 7px; background: #262626; }

.tabs { display: flex; flex: none; height: 30px; background: #3b3b3b; font: 25px/30px "Liberation Sans", Arial, sans-serif; color: #fff; }
.bang { width: 14px; padding-left: 5px; }
.tab { display: flex; align-items: center; gap: 10px; width: 132px; padding-left: 14px; color: #222; font-weight: 700; text-decoration: none; background: #7d8986; clip-path: polygon(0 0, 100% 0, 91% 100%, 10% 100%); }
.desk { flex: none; height: 9px; border-top: 2px solid #242424; background: linear-gradient(90deg, #383838, #2b2b2b 540px, #4b4b4b 560px, #4b4b4b 1300px, #333 1470px, #1d1d1d 1475px); }

.clock { position: absolute; left: 731px; top: 853px; width: 1142px; height: 453px; display: flex; flex-direction: column; border-radius: 24px 24px 0 0; background: #333; box-shadow: 0 0 0 2px #303030, 0 6px 16px rgba(0,0,0,.4); }
.clock header { position: relative; height: 74px; flex: none; display: flex; align-items: center; justify-content: center; background: #fafafa; border-bottom: 2px solid #d0d0d0; border-radius: 24px 24px 0 0; }
.clock h2 { margin: 0; font-size: 28px; line-height: 36px; padding-bottom: 2px; color: #999; }
.clock .winbtns button { background: none; }
.clock output { flex: 1; display: flex; align-items: center; justify-content: center; font-size: 207px; line-height: 280px; font-weight: 700; color: #7f7f7f; }
```
FILE: app.js
```js
const use = (id, w, h, cls = '') => `<svg class="${cls}" width="${w}" height="${h}"><use href="#${id}"/></svg>`;
const rec = armed => `<button class="recb" aria-label="Record arm">${use(armed ? 'rec-on' : 'rec', 40, 44)}</button>`;
const select = (cls, label, value, extra = '') => `<div class="dd ${cls}">${extra}<select aria-label="${label}"><option>${value}</option></select></div>`;
const infx = '<button class="infx">IN\nFX</button>';

// Track panels
const tracks = [
  { name: 'Guitar POD', input: 'Input 7 / Input 8', peak: '-93' },
  { name: 'NightBass' },
  { name: 'Piano-P-105', input: 'Input 11 / Input 12', peak: '-81' },
  { name: 'M88 MIC' }
];
const trim = `<button class="trim narrow">${use('env', 26, 18)}TRIM</button>`;
document.getElementById('tracks').innerHTML = tracks.map((t, i) => `
<article class="track ${t.input ? 'armed' : ''}">
  <div class="idx">${i + 1}<svg width="16" height="12"><path d="M0 0H9L12 4H16V12H0z" fill="#6c7371"/></svg></div>
  <div class="controls">
    <div class="row">
      <div class="name">${rec(t.input)}${t.input ? use('speaker', 16, 28, 'sp') : ''}<span>${t.name}</span><input class="knob tk" type="range" aria-label="Volume"></div>
      <div class="ms"><button class="sq m">M</button><button class="sq s">S</button></div>
      <div class="fx"><button class="f">FX</button><button class="p" aria-label="FX bypass">${use('power', 16, 18)}</button></div>
    </div>
    <div class="row">${t.input ? select('io', 'Record mode', 'in') + select('in', 'Record input', t.input, infx) : ''}${trim}</div>
  </div>
  <div class="meter">${t.peak ? `${t.peak}<div class="bars"><span>-6-</span><span>-18</span><span>-30</span><span>-42</span><span>-54</span></div>` : ''}</div>
</article>`).join('');

// Routing button: sends, receives and hardware stripes light up separately
const stripes = lit => {
  const c = [lit[0] ? '#17c3a0' : '#32564e', lit[1] ? '#ffe500' : '#5a5733', lit[2] ? '#009cff' : '#2e4657'];
  return `<svg width="36" height="36"><path d="M-4 36L8 0H17L5 36z" fill="${c[0]}"/><path d="M8 36L20 0H29L17 36z" fill="${c[1]}"/><path d="M21 36L33 0H42L30 36z" fill="${c[2]}"/></svg>`;
};
document.getElementById('mroute').innerHTML = stripes([1, 1, 0]);

// Mixer strips
const strips = [
  ['Guitar POD', 'Input 7 / Inp..8', 'in', '-93.9', [1, 0, 0]],
  ['NightBass', 'Input 9 / Ir..10', 'in', '', [1, 0, 0]],
  ['Piano-P-105', 'Input 11 / ..12', 'in', '-81.2', [1, 0, 0]],
  ['M88 MIC', 'Input 13', 'in', '', [1, 0, 0]],
  ['Beat Buddy', 'Input 14', 'in', '', [1, 0, 0]],
  ['KORG', 'Input 15 / ..16', 'in', '', [1, 0, 0]],
  ['Computer', 'Input 19 / ..20', 'in', '', [1, 0, 0]],
  ['Tascam', 'Input 17 / ..18', 'in', '', [1, 0, 0]],
  ['Pianoteq 8', 'MIDI (not conne', 'in', '', [0, 0, 0], 'w192'],
  ['EZbass', 'MIDI: All: All chan', 'out', '', [0, 1, 0], 'w200'],
  ['EZbass 1/2', 'Input 1 (recor', 'out', '', [1, 1, 1]]
];
document.getElementById('strips').innerHTML = strips.map(([name, input, io, peak, lit, w], i) => `
<article class="strip ${w || ''} ${peak ? 'armed' : ''}">
  <div class="stop">
    ${select('', 'Record input', input)}
    <div class="between">${select('io', 'Record mode', io)}<div class="wrapfx">${infx}</div></div>
    <input class="knob" type="range" aria-label="Pan">
  </div>
  <div class="slow">
    <div class="cols">
      <div class="c1"><span class="peak">${peak || '-inf'}</span><div class="bars ${peak ? '' : 'none'}">${peak ? '<span>-18-</span><span>-30-</span><span>-42-</span><span>-54-</span>' : ''}</div><button class="spb" aria-label="Monitor">${use('speaker', 16, 28)}</button></div>
      <div class="c2"><div class="fader">${use('cap', 50, 92, 'cap')}<input type="range" aria-label="Volume"></div>${rec(peak)}</div>
      <div class="c3"><button class="sq m">M</button><button class="sq s">S</button><button class="sq route" aria-label="Route">${stripes(lit)}</button><button class="sq grey envb" aria-label="Envelopes">${use('env', 26, 18)}</button></div>
    </div>
    <div class="sname">${name}</div>
  </div>
  <div class="sfoot">${i + 1}</div>
</article>`).join('');

// Waveform: one min/max bar per pixel, then a decaying tail
const W = 1671, END = 1100, peaks = { 285: [24, 27], 462: [20, 24], 470: [19, 15], 490: [18, 12], 645: [21, 12], 697: [18, 22], 718: [21, 12], 732: [22, 8], 738: [22, 24], 797: [20, 10], 827: [10, 23], 898: [23, 19], 915: [21, 14], 1084: [24, 22], 1096: [22, 26], 1040: [17, 14] };
let seed = 7;
const rnd = () => (seed = (seed * 16807) % 2147483647) / 2147483647;
const bars = [];
let crest = 14, trough = 16, step = 4, at = 0;
for (let x = 0; x < END; x++) {
  const dense = x > 905 && x < 1070;
  if (x - at >= step) { at = x; step = 4 + Math.floor(3 * rnd()); crest = 11 + 7 * rnd(); trough = 11 + 10 * rnd(); }
  const k = x - at, thin = 6 + 3 * Math.sin(x * 0.13 + 2 * Math.sin(x * 0.021));
  const ramp = v => [0.9, 1, 0.65, 0.4, 0.5, 0.7][v % 6];
  let up = Math.max(thin + 2 * rnd(), crest * ramp(k));
  let dn = Math.max(thin + 2 * rnd(), trough * ramp(k + 4));
  if (dense) { up = Math.max(9 + 3 * rnd(), up * 0.85); dn = Math.max(11 + 3 * rnd(), dn * 0.85); }
  for (const d of [-1, 0, 1]) if (peaks[x + d]) { const f = d ? 0.7 : 1; up = Math.max(up, peaks[x + d][0] * f); dn = Math.max(dn, peaks[x + d][1] * f); }
  bars.push([up, dn]);
}
const channel = c => {
  const d = bars.map(([u, n], x) => `M${x + 0.5} ${(c - u).toFixed(1)}V${(c + n).toFixed(1)}`).join('');
  let tail = `M1100 ${c}`;
  for (let x = 1100; x < 1180; x += 0.5) {
    const a = 18 * Math.max(0.15, 1 - (x - 1104) / 75);
    tail += `L${x} ${(c - a * Math.sin((x - 1104) * 0.97)).toFixed(1)}`;
  }
  let dots = '';
  for (let x = 1180; x < 1385; x += 4) if (x < 1238 || rnd() > 0.7) dots += `M${x} ${c}h3`;
  return `<path d="${d}" stroke="#1a1a1a"/><path d="${tail}" fill="none" stroke="#1a1a1a" stroke-width="2"/><path d="${dots}" stroke="#1a1a1a" stroke-width="2"/><path d="M0 ${c}.5H${W}" stroke="#1a1a1a"/>`;
};
document.getElementById('wave').innerHTML = channel(58) + channel(173);
```
